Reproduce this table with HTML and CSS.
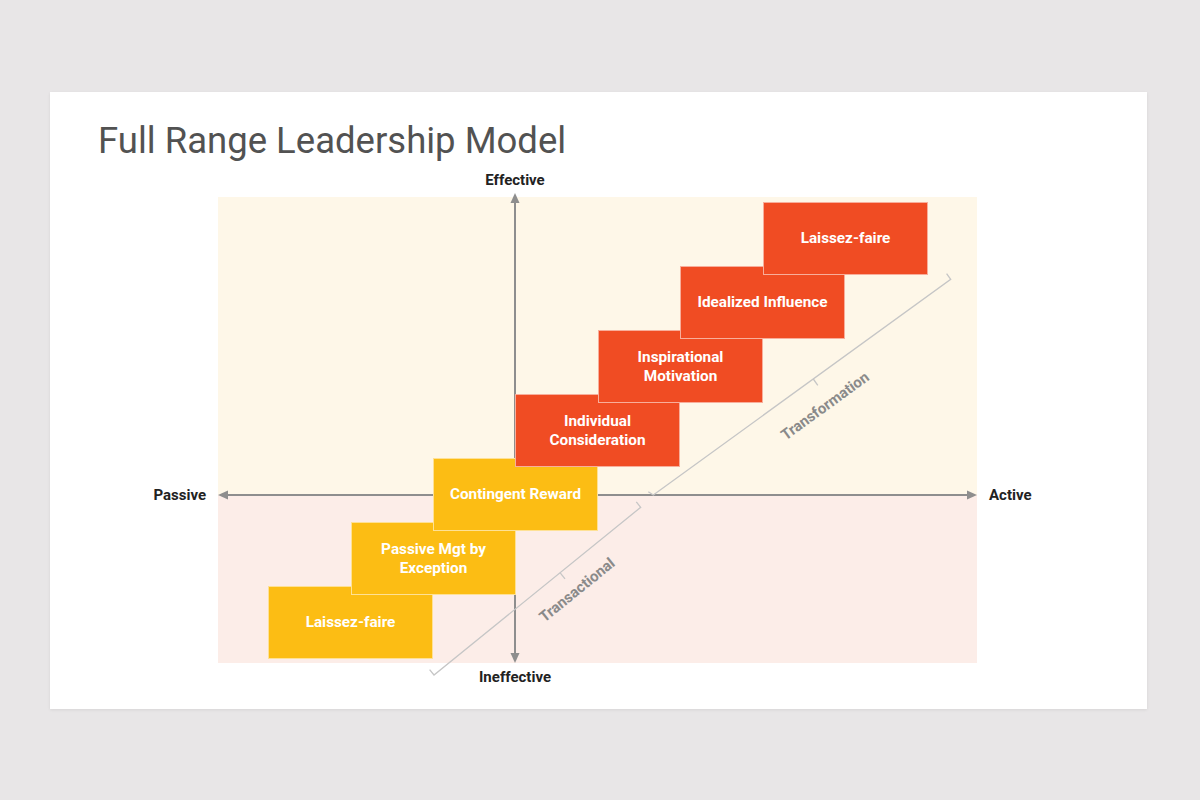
FILE: index.html
```html
<!DOCTYPE html>
<html lang="en">
<head>
<meta charset="utf-8">
<title>Full Range Leadership Model</title>
<link rel="stylesheet" href="styles.css">
</head>
<body>
<div class="slide">
  <h1 class="title">Full Range Leadership Model</h1>
  <div class="chart">
    <div class="quad quad-top"></div>
    <div class="quad quad-bottom"></div>
    <svg class="lines" width="759" height="466" viewBox="0 0 759 466">
      <g class="axis">
        <line x1="297" y1="5" x2="297" y2="457"/>
        <line x1="9" y1="298" x2="750" y2="298"/>
      </g>
      <g class="arrow">
        <polygon points="297,-4 292.5,6 301.5,6"/>
        <polygon points="297,466 292.5,456 301.5,456"/>
        <polygon points="0,298 10,293.5 10,302.5"/>
        <polygon points="759,298 749,293.5 749,302.5"/>
      </g>
      <g class="brace">
        <polyline points="430.3,294.7 435.3,298 732.7,82.3 728.6,76.6"/>
        <line x1="595.3" y1="182" x2="599.8" y2="188.3"/>
        <polyline points="211.6,472.6 216,478 422.7,310.3 418.3,304.9"/>
        <line x1="342" y1="375.7" x2="347" y2="381.9"/>
      </g>
    </svg>
    <span class="axis-label lbl-top">Effective</span>
    <span class="axis-label lbl-bottom">Ineffective</span>
    <span class="axis-label lbl-left">Passive</span>
    <span class="axis-label lbl-right">Active</span>
    <span class="brace-label lbl-transformation">Transformation</span>
    <span class="brace-label lbl-transactional">Transactional</span>

    <div class="step yellow s1">Laissez-faire</div>
    <div class="step yellow s2">Passive Mgt by<br>Exception</div>
    <div class="step yellow s3">Contingent Reward</div>
    <div class="step red s4">Individual<br>Consideration</div>
    <div class="step red s5">Inspirational<br>Motivation</div>
    <div class="step red s6">Idealized Influence</div>
    <div class="step red s7">Laissez-faire</div>
  </div>
</div>
</body>
</html>
```
FILE: styles.css
```css
html, body {
  margin: 0;
  padding: 0;
}
body {
  width: 1200px;
  height: 800px;
  background: #e8e6e7;
  font-family: Roboto, "Liberation Sans", Arial, sans-serif;
  overflow: hidden;
}
.slide {
  box-sizing: border-box;
  margin: 92px 0 0 50px;
  width: 1097px;
  height: 617px;
  padding: 27px 0 0 48px;
  background: #ffffff;
  box-shadow: 0 1px 3px rgba(0, 0, 0, 0.08);
  display: flex;
  flex-direction: column;
}
.title {
  margin: 0;
  font-family: Roboto, "Liberation Sans", Arial, sans-serif;
  font-weight: 400;
  font-size: 36.5px;
  line-height: 44px;
  color: #525252;
}
.chart {
  position: relative;
  margin: 34px 0 0 120px;
  width: 759px;
  height: 466px;
  display: flex;
  flex-direction: column;
}
.quad-top {
  height: 298px;
  background: #fef7e8;
}
.quad-bottom {
  height: 168px;
  background: #fcede8;
}
.lines {
  position: absolute;
  left: 0;
  top: 0;
  overflow: visible;
}
.axis line {
  stroke: #8e8e8e;
  stroke-width: 2;
}
.arrow polygon {
  fill: #8e8e8e;
}
.brace polyline,
.brace line {
  fill: none;
  stroke: #c6c6c6;
  stroke-width: 1.3;
}
.axis-label {
  position: absolute;
  font-weight: 700;
  font-size: 15px;
  line-height: 18px;
  color: #222222;
  white-space: nowrap;
}
.lbl-top {
  left: 297px;
  top: -17px;
  transform: translate(-50%, -50%);
}
.lbl-bottom {
  left: 297px;
  top: 480px;
  transform: translate(-50%, -50%);
}
.lbl-left {
  right: 771px;
  top: 289px;
}
.lbl-right {
  left: 771px;
  top: 289px;
}
.brace-label {
  position: absolute;
  font-weight: 700;
  font-size: 15px;
  line-height: 18px;
  color: #8a8a8a;
  white-space: nowrap;
}
.lbl-transformation {
  left: 607px;
  top: 209px;
  transform: translate(-50%, -50%) rotate(-36deg);
}
.lbl-transactional {
  left: 359px;
  top: 393px;
  transform: translate(-50%, -50%) rotate(-39deg);
}
.step {
  position: absolute;
  box-sizing: border-box;
  width: 165px;
  height: 73px;
  display: flex;
  align-items: center;
  justify-content: center;
  text-align: center;
  color: #ffffff;
  font-weight: 700;
  font-size: 15.3px;
  line-height: 18.5px;
  border: 1px solid rgba(255, 255, 255, 0.55);
}
.yellow {
  background: #fcbd14;
}
.red {
  background: #f04c23;
}
.s1 { left: 50px;  top: 389px; }
.s2 { left: 133px; top: 325px; }
.s3 { left: 215px; top: 261px; }
.s4 { left: 297px; top: 197px; }
.s5 { left: 380px; top: 133px; }
.s6 { left: 462px; top: 69px; }
.s7 { left: 545px; top: 5px; }
```
